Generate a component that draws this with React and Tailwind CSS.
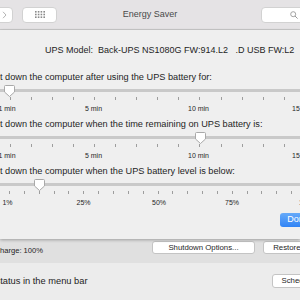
import React from "react";

function Thumb() {
  return (
    <svg width="11" height="12" viewBox="0 0 11 12">
      <path
        d="M1.5 0.5 H9.5 Q10.5 0.5 10.5 1.5 V7 L5.5 11.5 L0.5 7 V1.5 Q0.5 0.5 1.5 0.5 Z"
        fill="#ffffff"
        stroke="#a9a9a9"
        strokeWidth="1"
      />
    </svg>
  );
}

function Slider({ ticks, thumb, labels }) {
  return (
    <div className="relative h-[36px]">
      <div className="absolute left-[-10px] right-[-10px] top-[6.5px] h-[3px] rounded-full bg-[#c9c9c9]" />
      {ticks.map((x, i) => (
        <div
          key={i}
          className="absolute top-[14px] h-[3px] w-px bg-[#9d9d9d]"
          style={{ left: x }}
        />
      ))}
      <div className="absolute top-[2px]" style={{ left: thumb - 5.5 }}>
        <Thumb />
      </div>
      {labels.map(([text, x], i) => (
        <span
          key={i}
          className="absolute top-[22.5px] -translate-x-1/2 whitespace-nowrap text-[7px] leading-[8px] text-[#262626]"
          style={{ left: x }}
        >
          {text}
        </span>
      ))}
    </div>
  );
}

function Section({ text, ticks, thumb, labels }) {
  return (
    <div className="h-[47px]">
      <div className="ml-[-16.4px] h-[11px] whitespace-nowrap text-[9.2px] leading-[11px] text-[#1e1e1e]">
        {text}
      </div>
      <Slider ticks={ticks} thumb={thumb} labels={labels} />
    </div>
  );
}

const minTicks = Array.from({ length: 15 }, (_, k) => Math.round(10 + 21.05 * k));
const pctTicks = Array.from({ length: 21 }, (_, k) => Math.round(9 + 14.85 * k));
const minLabels = [
  ["1 min", 7],
  ["5 min", 93.5],
  ["10 min", 198.5],
  ["15 min", 302.5],
];
const pctLabels = [
  ["1%", 7.5],
  ["25%", 83.5],
  ["50%", 159],
  ["75%", 232],
  ["100%", 308],
];

export default function App() {
  return (
    <div className="h-[300px] w-[300px] overflow-hidden bg-[#ececec] font-['Liberation_Sans',Arial,sans-serif] text-[#1e1e1e]">
      {/* toolbar */}
      <div className="grid h-[30px] grid-cols-[1fr_auto_1fr] items-center border-b border-[#cbcbcb] bg-[#e5e3e5]">
        <div className="flex items-center">
          <div className="ml-[-4px] flex h-[16px] w-[17px] items-center justify-center rounded-r-[4px] border border-[#d2d2d2] bg-white">
            <svg width="5" height="8" viewBox="0 0 5 8">
              <path d="M1 0.8 L4 4 L1 7.2" fill="none" stroke="#b5b5b5" strokeWidth="1" />
            </svg>
          </div>
          <div className="ml-[9px] flex h-[16px] w-[35px] items-center justify-center rounded-[4px] border border-[#d2d2d2] bg-white">
            <svg width="10" height="7" viewBox="0 0 10 7">
              {[0, 2.8, 5.6, 8.4].map((x) =>
                [0, 2.7, 5.4].map((y) => (
                  <rect key={x + "-" + y} x={x} y={y} width="1.6" height="1.6" fill="#8a8a8a" />
                ))
              )}
            </svg>
          </div>
        </div>
        <div className="text-[9px] leading-[11px] text-[#4a4a4a]">Energy Saver</div>
        <div className="flex justify-end">
          <div className="mr-[-12px] flex h-[16px] w-[51px] items-center rounded-l-[4px] border border-[#d2d2d2] bg-white pl-[28px]">
            <svg width="8" height="8" viewBox="0 0 8 8">
              <circle cx="3.2" cy="3.2" r="2.5" fill="none" stroke="#9a9a9a" strokeWidth="0.9" />
              <path d="M5 5 L7.6 7.6" stroke="#9a9a9a" strokeWidth="1" />
            </svg>
          </div>
        </div>
      </div>

      {/* sheet */}
      <div className="relative z-10 bg-[#efefef] pb-[12px] pt-[14.5px] shadow-[0_1px_3px_rgba(0,0,0,0.3)]">
        <div className="h-[11px] whitespace-pre pl-[45px] text-[9px] leading-[11px]">
          {"UPS Model:  Back-UPS NS1080G FW:914.L2   .D USB FW:L2"}
        </div>
        <div className="mt-[16px]">
          <Section
            text="Shut down the computer after using the UPS battery for:"
            ticks={minTicks}
            thumb={9.5}
            labels={minLabels}
          />
          <Section
            text="Shut down the computer when the time remaining on UPS battery is:"
            ticks={minTicks}
            thumb={200}
            labels={minLabels}
          />
          <Section
            text="Shut down the computer when the UPS battery level is below:"
            ticks={pctTicks}
            thumb={39.5}
            labels={pctLabels}
          />
        </div>
        <div className="mr-[-16px] mt-[0.5px] flex justify-end">
          <div className="flex h-[14px] w-[36px] items-center justify-center rounded-[3px] bg-gradient-to-b from-[#66aaf9] to-[#2f83f5] text-[9px] text-white">
            Done
          </div>
        </div>
      </div>

      {/* strip */}
      <div className="flex h-[24px] items-start bg-[#e0e0e0] pt-[2px]">
        <div className="ml-[-30px] mt-[5px] whitespace-nowrap text-[7.6px] leading-[9px]">
          Battery charge: 100%
        </div>
        <div className="ml-auto mr-[-48px] flex gap-[8px]">
          <div className="flex h-[13px] w-[103px] items-center justify-center whitespace-nowrap rounded-[3px] border border-[#c4c4c4] bg-white text-[7.8px]">
            Shutdown Options...
          </div>
          <div className="flex h-[13px] w-[85px] items-center justify-center whitespace-nowrap rounded-[3px] border border-[#c4c4c4] bg-white text-[7.8px]">
            Restore Defaults...
          </div>
        </div>
      </div>

      {/* lower */}
      <div className="bg-[#ececec] pt-[11px]">
        <div className="flex h-[14px] items-center">
          <div className="ml-[-52px] whitespace-nowrap text-[9.3px] leading-[11px]">
            Show UPS status in the menu bar
          </div>
          <div className="ml-auto mr-[-30px] flex h-[14px] w-[58px] items-center justify-center whitespace-nowrap rounded-[3px] border border-[#c4c4c4] bg-white text-[7.8px]">
            Schedule...
          </div>
        </div>
      </div>
    </div>
  );
}
